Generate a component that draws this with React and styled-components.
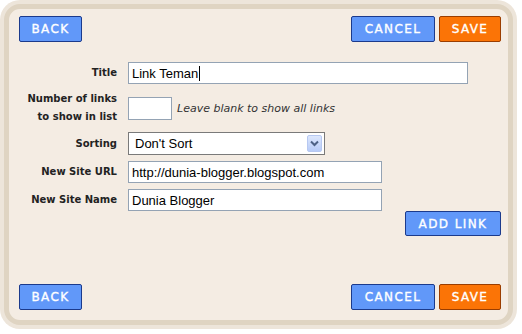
import React from 'react'
import styled, { createGlobalStyle } from 'styled-components'

const GlobalStyle = createGlobalStyle`
  html, body {
    margin: 0;
    padding: 0;
    background: #ffffff;
  }
  * { box-sizing: border-box; }
`

const Frame = styled.div`
  width: 517px;
  height: 329px;
  padding: 4px;
  background: #ede5da;
  border-radius: 20px;
`

const Panel = styled.div`
  height: 100%;
  display: flex;
  flex-direction: column;
  padding: 7px 7px 10px 10px;
  background: #f4ece3;
  border: 5px solid #dfd4c2;
  border-radius: 16px;
`

const ButtonBar = styled.div`
  display: flex;
  align-items: center;
  gap: 4px;
  margin-top: ${({ $bottom }) => ($bottom ? 'auto' : '0')};
`

const Spacer = styled.div`
  flex: 1;
`

const Button = styled.button`
  height: ${({ $short }) => ($short ? '25px' : '26px')};
  padding: 0 10px;
  min-width: ${({ $w }) => $w || 0}px;
  border: 1px solid ${({ $variant }) => ($variant === 'save' ? '#9a3d00' : '#1b3a8c')};
  border-radius: 2px;
  background: ${({ $variant }) => ($variant === 'save' ? '#fb7406' : '#6198f9')};
  color: #ffffff;
  font-family: "DejaVu Sans", Verdana, sans-serif;
  font-weight: normal;
  font-size: 12px;
  letter-spacing: 1.4px;
  -webkit-text-stroke: 0.35px #ffffff;
  text-transform: uppercase;
  cursor: pointer;
`

const Form = styled.div`
  display: grid;
  grid-template-columns: 98px auto;
  column-gap: 11px;
  row-gap: 6px;
  align-items: center;
  margin-top: 20px;
`

const Label = styled.div`
  text-align: right;
  font-family: "DejaVu Sans", Verdana, sans-serif;
  font-weight: bold;
  font-size: 10px;
  line-height: 18px;
  color: #222222;
`

const FieldCell = styled.div`
  display: flex;
  align-items: center;
`

const TextBox = styled.div`
  display: flex;
  align-items: center;
  width: ${({ $w }) => $w}px;
  height: ${({ $h }) => $h || 22}px;
  padding-left: 3px;
  background: #ffffff;
  border: 1px solid #94a3b4;
  font-family: "Liberation Sans", Arial, sans-serif;
  font-size: 13px;
  color: #000000;
  white-space: nowrap;
`

const Caret = styled.span`
  display: inline-block;
  width: 1px;
  height: 15px;
  margin-left: 1px;
  background: #000000;
`

const Hint = styled.span`
  margin-left: 5px;
  font-family: "DejaVu Sans", Verdana, sans-serif;
  font-style: italic;
  font-size: 11px;
  color: #333333;
`

const Select = styled.div`
  display: flex;
  align-items: center;
  width: 197px;
  height: 23px;
  padding: 0 2px 0 6px;
  background: #ffffff;
  border: 1px solid #7a7a7a;
  font-family: "Liberation Sans", Arial, sans-serif;
  font-size: 13px;
  color: #000000;
`

const SelectText = styled.span`
  flex: 1;
`

const DropArrow = styled.span`
  display: flex;
  align-items: center;
  justify-content: center;
  width: 15px;
  height: 17px;
  border: 1px solid #b7c8f1;
  border-radius: 2px;
  background: linear-gradient(#dde7fd, #b7cbf7);
`

const AddRow = styled.div`
  display: flex;
  justify-content: flex-end;
`

const Chevron = () => (
  <svg width="9" height="7" viewBox="0 0 9 7">
    <path d="M1 1.5 L4.5 5 L8 1.5" fill="none" stroke="#4d6185" strokeWidth="2" />
  </svg>
)

const Actions = ({ bottom }) => (
  <ButtonBar $bottom={bottom}>
    <Button $w={63}>Back</Button>
    <Spacer />
    <Button $w={84}>Cancel</Button>
    <Button $w={62} $variant="save">Save</Button>
  </ButtonBar>
)

export default function App() {
  return (
    <>
      <GlobalStyle />
      <Frame>
        <Panel>
          <Actions />
          <Form>
            <Label>Title</Label>
            <FieldCell>
              <TextBox $w={340}>
                Link Teman<Caret />
              </TextBox>
            </FieldCell>

            <Label>
              Number of links
              <br />
              to show in list
            </Label>
            <FieldCell>
              <TextBox $w={44} $h={23} />
              <Hint>Leave blank to show all links</Hint>
            </FieldCell>

            <Label>Sorting</Label>
            <FieldCell>
              <Select>
                <SelectText>Don't Sort</SelectText>
                <DropArrow>
                  <Chevron />
                </DropArrow>
              </Select>
            </FieldCell>

            <Label>New Site URL</Label>
            <FieldCell>
              <TextBox $w={254}>http://dunia-blogger.blogspot.com</TextBox>
            </FieldCell>

            <Label>New Site Name</Label>
            <FieldCell>
              <TextBox $w={254}>Dunia Blogger</TextBox>
            </FieldCell>
          </Form>
          <AddRow>
            <Button $w={96} $short>Add Link</Button>
          </AddRow>
          <Actions bottom />
        </Panel>
      </Frame>
    </>
  )
}
